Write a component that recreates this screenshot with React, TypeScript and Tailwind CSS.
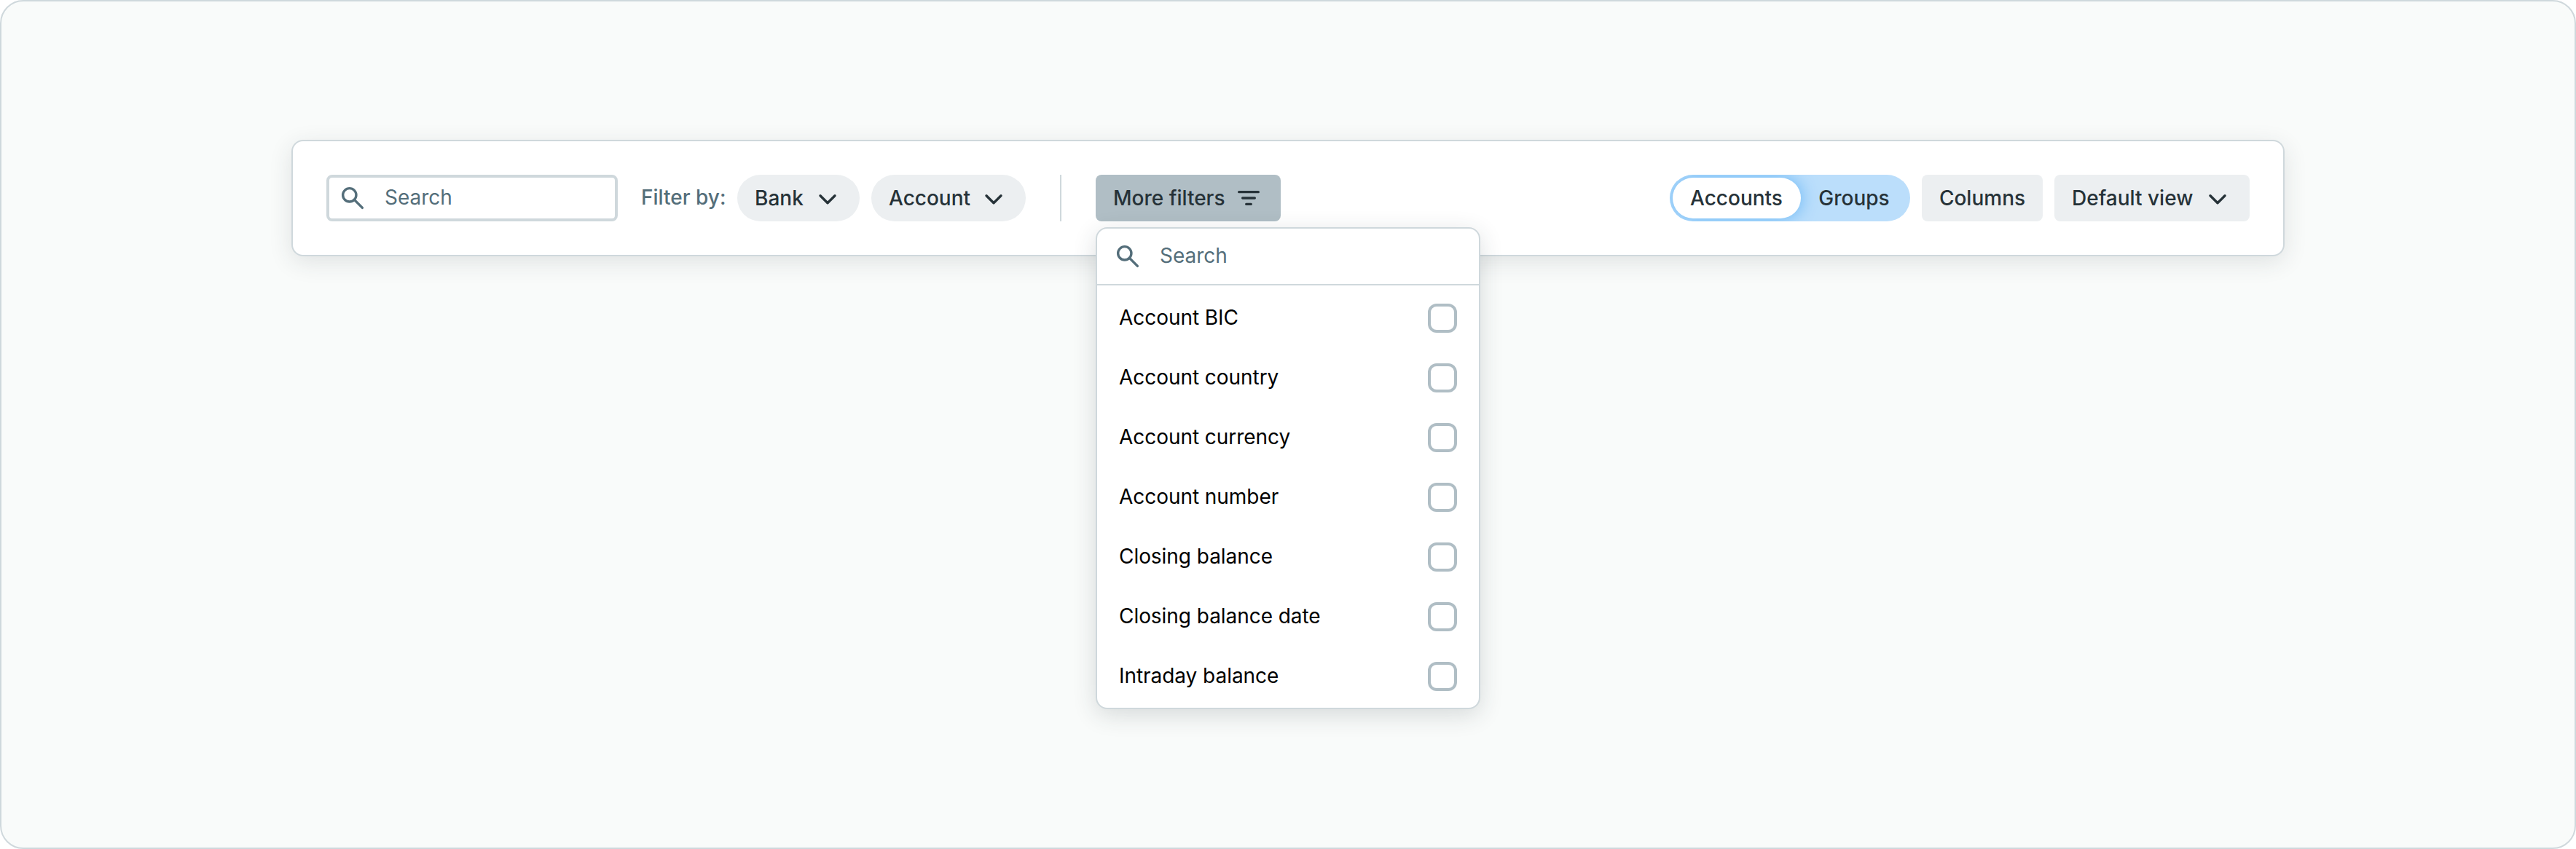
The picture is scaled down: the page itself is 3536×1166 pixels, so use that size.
import type { ReactNode } from "react";

const FILTERS = [
  "Account BIC",
  "Account country",
  "Account currency",
  "Account number",
  "Closing balance",
  "Closing balance date",
  "Intraday balance",
];

function SearchIcon() {
  return (
    <svg className="size-10 shrink-0" viewBox="0 0 40 40" fill="none" stroke="#546e7a" strokeLinecap="round">
      <circle cx="15.8" cy="15.8" r="9.15" strokeWidth="3.4" />
      <path d="M22.9 22.9 L33.4 33.4" strokeWidth="3.4" />
    </svg>
  );
}

function ChevronIcon() {
  return (
    <svg className="size-10 shrink-0" viewBox="0 0 40 40" fill="none" stroke="#263238" strokeWidth="3.4" strokeLinecap="round" strokeLinejoin="round">
      <path d="M10 16.8 L20 26.8 L30 16.8" />
    </svg>
  );
}

function FilterIcon() {
  return (
    <svg className="size-10 shrink-0" viewBox="0 0 40 40" fill="none" stroke="#263238" strokeWidth="3.34" strokeLinecap="round">
      <path d="M6.67 11.67H33.33M11.67 20H28.33M16.67 28.33H23.33" />
    </svg>
  );
}

function Pill({ className, children }: { className: string; children: ReactNode }) {
  return (
    <button className={`flex h-16 items-center justify-between rounded-full bg-[#eceff1] pl-6 pr-6 font-medium ${className}`}>
      {children}
    </button>
  );
}

function FilterMenu() {
  return (
    <div className="absolute left-0 top-[72px] z-10 h-[662px] w-[528px] rounded-2xl border-2 border-[#cfd8dc] bg-white shadow-[0_8px_32px_rgba(38,50,56,0.16)]">
      <div className="flex h-[78px] items-center gap-6 border-b-2 border-[#cfd8dc] pl-[22px] text-[#546e7a]">
        <SearchIcon />
        <span className="pb-0.5">Search</span>
      </div>
      <ul className="pt-1">
        {FILTERS.map((name) => (
          <li key={name} className="flex h-[82px] items-center justify-between pl-[30px] pr-[30px] text-black">
            <span className="pb-0.5 tracking-[-0.05px]">{name}</span>
            <span className="size-10 rounded-xl border-4 border-[#b0bec5]" />
          </li>
        ))}
      </ul>
    </div>
  );
}

export default function App() {
  return (
    <div className="h-[1166px] w-[3536px] rounded-[32px] border-2 border-[#cfd8dc] bg-[#f9fbfa] px-[398px] pt-[190px] font-['Inter',sans-serif] text-[28px] leading-10 text-[#263238]">
      <div className="flex h-40 items-center rounded-2xl border-2 border-[#cfd8dc] bg-white px-[46px] shadow-[0_8px_32px_rgba(38,50,56,0.12)]">
        <div className="flex h-16 w-[400px] items-center gap-6 rounded-lg border-4 border-[#cfd8dc] pl-3 text-[#546e7a]">
          <SearchIcon />
          <span className="pb-0.5">Search</span>
        </div>
        <span className="ml-8 w-[116px] whitespace-nowrap pb-0.5 font-medium text-[#546e7a]">Filter by:</span>
        <Pill className="ml-4 w-[168px]">
          Bank
          <ChevronIcon />
        </Pill>
        <Pill className="ml-4 w-[212px]">
          Account
          <ChevronIcon />
        </Pill>
        <div className="ml-[47px] h-16 w-0.5 bg-[#cfd8dc]" />
        <div className="relative ml-[47px]">
          <button className="flex h-16 w-[254px] items-center justify-between rounded-lg bg-[#b0bec5] px-6 font-medium">
            More filters
            <FilterIcon />
          </button>
          <FilterMenu />
        </div>
        <div className="ml-auto flex gap-4 font-medium">
          <div className="flex h-16 w-[330px] items-center overflow-hidden rounded-full bg-[#bbdefb] p-1">
            <button className="flex h-14 w-44 items-center justify-center rounded-full bg-white pr-px shadow-[0_0_24px_#64b5f6]">Accounts</button>
            <button className="flex-1 text-center">Groups</button>
          </div>
          <button className="h-16 w-[166px] rounded-lg bg-[#eceff1]">Columns</button>
          <button className="flex h-16 w-[268px] items-center justify-between rounded-lg bg-[#eceff1] px-6">
            Default view
            <ChevronIcon />
          </button>
        </div>
      </div>
    </div>
  );
}
